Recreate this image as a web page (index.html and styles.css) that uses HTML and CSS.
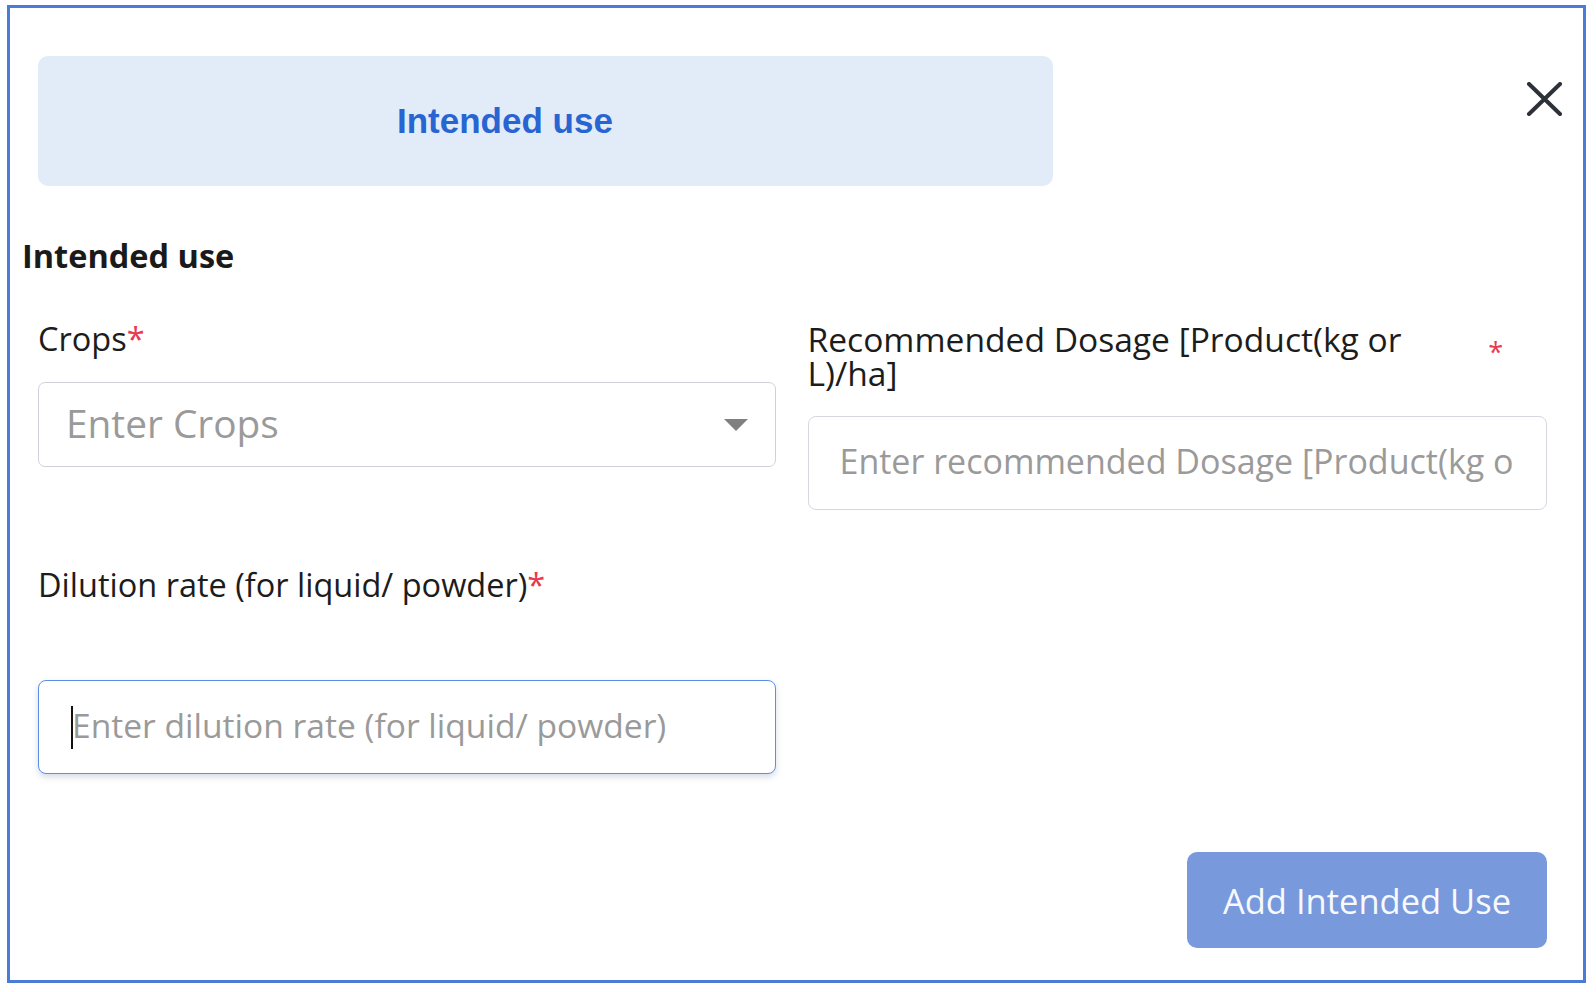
FILE: index.html
```html
<!DOCTYPE html>
<html lang="en">
<head>
<meta charset="utf-8">
<title>Intended use</title>
<link rel="stylesheet" href="styles.css">
</head>
<body>
<div class="modal">
  <div class="head">
    <div class="banner"><span class="banner-title">Intended use</span></div>
    <button class="close" type="button" aria-label="Close">
      <svg width="37" height="34" viewBox="0 0 37 34"><path d="M3 2 L34 32 M34 2 L3 32" stroke="#2d3138" stroke-width="4" stroke-linecap="round" fill="none"/></svg>
    </button>
  </div>
  <h2 class="section-title">Intended use</h2>
  <div class="form-grid">
    <div class="field field-crops">
      <label class="label"><span>Crops</span><span class="req">*</span></label>
      <div class="select">
        <span class="select-placeholder">Enter Crops</span>
        <svg class="select-arrow" width="24" height="12" viewBox="0 0 24 12"><path d="M0 0 H24 L12 12 Z" fill="#808080"/></svg>
      </div>
    </div>
    <div class="field field-dosage">
      <label class="label label-split"><span class="label-text">Recommended Dosage [Product(kg or L)/ha]</span><span class="req req-split">*</span></label>
      <input class="input input-dosage" type="text" placeholder="Enter recommended Dosage [Product(kg or L)/ha]">
    </div>
    <div class="field field-dilution">
      <label class="label"><span>Dilution rate (for liquid/ powder)</span><span class="req">*</span></label>
      <div class="input-wrap">
        <input class="input input-focus" type="text" placeholder="Enter dilution rate (for liquid/ powder)">
        <span class="caret"></span>
      </div>
    </div>
  </div>
  <div class="actions">
    <button class="btn" type="button">Add Intended Use</button>
  </div>
</div>
</body>
</html>
```

FILE: styles.css
```css
* { box-sizing: border-box; }
html, body { margin: 0; padding: 0; background: #ffffff; }
body { font-family: "Open Sans", "Liberation Sans", sans-serif; color: #1c1c1c; }

.modal {
  margin: 5px 0 0 7px;
  width: 1579px;
  height: 978px;
  border: 3px solid #4a7bd6;
  padding: 48px 36px 0 28px;
}

.head { display: flex; align-items: flex-start; }

.banner {
  width: 1015px;
  height: 130px;
  background: #e1ecf8;
  border-radius: 10px;
  display: flex;
  align-items: center;
  padding-left: 359px;
}
.banner-title {
  font-family: "Liberation Sans", Arial, sans-serif;
  font-weight: 700;
  font-size: 35px;
  color: #2865d2;
}

.close {
  margin-left: auto;
  margin-right: -16px;
  margin-top: 26px;
  width: 37px;
  height: 34px;
  padding: 0;
  border: 0;
  background: none;
  display: block;
}
.close svg { display: block; }

.section-title {
  margin: 50px 0 0 -16px;
  font-size: 32.5px;
  font-weight: 700;
  line-height: 40px;
  color: #1a1a1a;
}

.form-grid {
  margin-top: 36px;
  display: grid;
  grid-template-columns: 1fr 1fr;
  column-gap: 30px;
  row-gap: 58px;
  align-items: start;
}

.field { display: flex; flex-direction: column; }
.field-crops { margin-top: 10px; }
.field-dosage { margin-top: 10px; }

.label {
  display: flex;
  font-size: 32.5px;
  line-height: 34px;
  color: #1c1c1c;
}
.req { color: #e8394f; }
.label-split { padding-right: 44px; font-size: 33.6px; }
.label-text { flex: 1 1 auto; }
.req-split { font-size: 27px; padding-top: 20px; line-height: 20px; }

.select {
  margin-top: 26px;
  width: 738px;
  height: 85px;
  border: 1.5px solid #cfd3d9;
  border-radius: 7px;
  display: flex;
  align-items: center;
  padding: 0 27px 3px 27px;
}
.select-placeholder {
  flex: 1 1 auto;
  font-size: 38.8px;
  color: #9a9a9a;
}
.select-arrow { display: block; margin-top: 4px; }

.input {
  width: 100%;
  height: 94px;
  border: 1.5px solid #d5d9df;
  border-radius: 8px;
  padding: 0 33px 4px 31px;
  font-family: "Open Sans", "Liberation Sans", sans-serif;
  font-size: 33.6px;
  color: #1c1c1c;
  background: #fff;
  outline: none;
}
.input::placeholder { color: #9a9a9a; opacity: 1; }
.input-dosage { margin-top: 26px; font-size: 34px; }

.input-wrap { position: relative; margin-top: 78px; width: 738px; }
.input-focus {
  border-color: #5b8fe6;
  box-shadow: 0 3px 6px rgba(60, 90, 140, 0.22);
  padding-left: 33px;
}
.caret {
  position: absolute;
  left: 33px;
  top: 26px;
  width: 2px;
  height: 43px;
  background: #111;
}

.actions {
  margin-top: 78px;
  display: flex;
  justify-content: flex-end;
}
.btn {
  width: 360px;
  height: 96px;
  border: 0;
  border-radius: 10px;
  background: #7899dc;
  color: #f7f9fd;
  font-family: "Open Sans", "Liberation Sans", sans-serif;
  font-size: 34.5px;
  font-weight: 500;
  padding: 0;
}
```
